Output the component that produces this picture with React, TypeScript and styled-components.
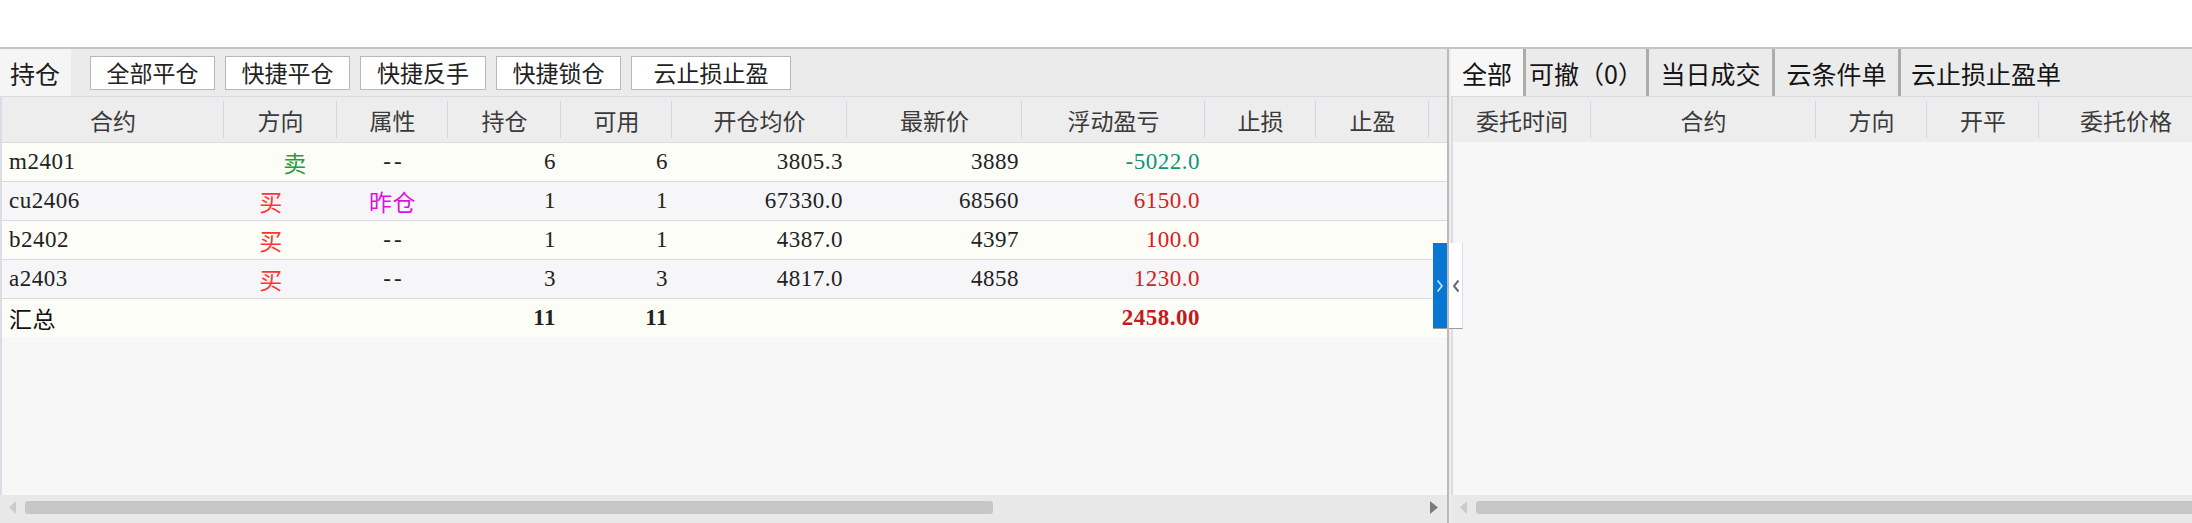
import React from 'react'
import styled, { createGlobalStyle, css } from 'styled-components'

const GlobalStyle = createGlobalStyle`
  html, body {
    margin: 0;
    padding: 0;
    background: #ffffff;
    overflow: hidden;
  }
  * {
    box-sizing: border-box;
  }
`

const SANS = `"Noto Sans CJK SC", "Noto Sans", sans-serif`
const SERIF = `"Liberation Serif", "Noto Sans CJK SC", serif`

type Align = 'left' | 'center' | 'right'

const LEFT_COLS = '222px 113px 111px 113px 111px 175px 175px 183px 111px 113px 1fr'
const RIGHT_COLS = '138px 225px 111px 112px 174px'

const Page = styled.div`
  width: 2192px;
  height: 523px;
  display: flex;
  flex-direction: column;
  overflow: hidden;
`

const TopBar = styled.div`
  height: 49px;
  flex: none;
  background: #ffffff;
  border-bottom: 2px solid #c4c4c4;
`

const Workspace = styled.div`
  position: relative;
  flex: 1;
  display: flex;
  min-height: 0;
`

const Pane = styled.div<{ $w?: number }>`
  display: flex;
  flex-direction: column;
  min-width: 0;
  overflow: hidden;
  ${(p) =>
    p.$w
      ? css`
          width: ${p.$w}px;
          flex: none;
        `
      : css`
          flex: 1;
        `}
`

const Toolbar = styled.div`
  height: 47px;
  flex: none;
  display: flex;
  align-items: center;
  gap: 10px;
  background: #ebebeb;
`

const PaneLabel = styled.div`
  width: 71px;
  height: 100%;
  margin-right: 9px;
  display: flex;
  align-items: center;
  padding-left: 10px;
  background: #f5f5f5;
  font-family: ${SANS};
  font-size: 25px;
  color: #1c1c1c;
`

const ToolButton = styled.button<{ $w: number }>`
  width: ${(p) => p.$w}px;
  height: 34px;
  padding: 0;
  background: #ffffff;
  border: 1px solid #b8b8b8;
  border-radius: 0;
  font-family: ${SANS};
  font-size: 23px;
  line-height: 1;
  color: #222;
`

const TabBar = styled.div`
  height: 47px;
  flex: none;
  display: flex;
  background: #ebebeb;
`

const Tab = styled.div<{ $active?: boolean; $w?: number; $last?: boolean }>`
  height: 100%;
  display: flex;
  align-items: center;
  justify-content: ${(p) => (p.$w ? 'center' : 'flex-start')};
  padding: 0 10px;
  width: ${(p) => (p.$w ? `${p.$w}px` : 'auto')};
  flex: none;
  background: ${(p) => (p.$active ? '#f7f7f7' : '#ebebeb')};
  border-right: ${(p) => (p.$last ? 'none' : '3px solid #acacac')};
  font-family: ${SANS};
  font-size: 25px;
  color: #141414;
  white-space: nowrap;
`

const Table = styled.div`
  flex: 1;
  display: flex;
  flex-direction: column;
  min-height: 0;
  background: #f7f7f7;
  border-left: 2px solid #dcdce6;
`

const HeadRow = styled.div<{ $cols: string }>`
  height: 46px;
  flex: none;
  display: grid;
  grid-template-columns: ${(p) => p.$cols};
  background: #ededed;
  border-top: 1px solid #d8dbe3;
`

const HeadCell = styled.div<{ $sep?: boolean }>`
  position: relative;
  display: flex;
  align-items: center;
  justify-content: center;
  font-family: ${SANS};
  font-size: 23px;
  color: #3a3a3a;
  white-space: nowrap;

  &::after {
    content: '';
    display: ${(p) => (p.$sep === false ? 'none' : 'block')};
    position: absolute;
    top: 4px;
    bottom: 4px;
    right: 0;
    width: 1px;
    background: #d2d6de;
  }
`

const Row = styled.div<{ $alt?: boolean; $total?: boolean }>`
  height: 39px;
  flex: none;
  display: grid;
  grid-template-columns: ${LEFT_COLS};
  background: ${(p) => (p.$alt ? '#f6f6f8' : '#fdfdf8')};
  border-top: 1px solid #dadae2;
  font-weight: ${(p) => (p.$total ? 700 : 400)};
`

const Cell = styled.div<{
  $align?: Align
  $pl?: number
  $pr?: number
  $color?: string
  $spread?: boolean
  $plain?: boolean
}>`
  display: flex;
  align-items: center;
  justify-content: ${(p) =>
    p.$align === 'right' ? 'flex-end' : p.$align === 'center' ? 'center' : 'flex-start'};
  padding-left: ${(p) => p.$pl ?? 0}px;
  padding-right: ${(p) => p.$pr ?? 0}px;
  font-family: ${SERIF};
  font-size: 23px;
  letter-spacing: ${(p) => (p.$spread ? '3px' : '0.5px')};
  font-weight: ${(p) => (p.$plain ? 400 : 'inherit')};
  color: ${(p) => p.$color ?? '#222'};
  white-space: nowrap;
`

const Filler = styled.div`
  flex: 1;
`

const HScroll = styled.div`
  height: 28px;
  flex: none;
  display: flex;
  align-items: flex-start;
  padding-top: 6px;
  background: #e8e8e8;
  overflow: hidden;
`

const ScrollArrow = styled.svg<{ $end?: boolean }>`
  flex: none;
  width: 8px;
  height: 13px;
  margin: ${(p) => (p.$end ? '0 9px 0 auto' : '0 8px 0 9px')};
`

const ScrollThumb = styled.div<{ $w: number }>`
  flex: none;
  width: ${(p) => p.$w}px;
  height: 13px;
  border-radius: 3px;
  background: #c6c6c6;
`

const Splitter = styled.div`
  width: 4px;
  flex: none;
  background: #bababa;
  border-right: 2px solid #eeeeee;
`

const CollapseTab = styled.div<{ $blue?: boolean; $left: number }>`
  position: absolute;
  top: 194px;
  left: ${(p) => p.$left}px;
  width: 14px;
  height: 86px;
  display: flex;
  align-items: center;
  justify-content: center;
  background: ${(p) => (p.$blue ? '#0877d4' : '#ffffff')};
  border-bottom: 1px solid #9c9c9c;
  border-right: ${(p) => (p.$blue ? 'none' : '1px solid #cfe1f2')};
`

type Position = {
  code: string
  dir: '买' | '卖'
  attr: string
  pos: number
  avail: number
  open: string
  last: string
  pnl: string
}

const positions: Position[] = [
  { code: 'm2401', dir: '卖', attr: '--', pos: 6, avail: 6, open: '3805.3', last: '3889', pnl: '-5022.0' },
  { code: 'cu2406', dir: '买', attr: '昨仓', pos: 1, avail: 1, open: '67330.0', last: '68560', pnl: '6150.0' },
  { code: 'b2402', dir: '买', attr: '--', pos: 1, avail: 1, open: '4387.0', last: '4397', pnl: '100.0' },
  { code: 'a2403', dir: '买', attr: '--', pos: 3, avail: 3, open: '4817.0', last: '4858', pnl: '1230.0' },
]

const leftHeads = ['合约', '方向', '属性', '持仓', '可用', '开仓均价', '最新价', '浮动盈亏', '止损', '止盈']
const rightHeads = ['委托时间', '合约', '方向', '开平', '委托价格']
const toolButtons: [string, number][] = [
  ['全部平仓', 125],
  ['快捷平仓', 125],
  ['快捷反手', 126],
  ['快捷锁仓', 125],
  ['云止损止盈', 160],
]
const tabs: [string, number | undefined][] = [
  ['全部', 75],
  ['可撤（0）', 123],
  ['当日成交', 126],
  ['云条件单', 126],
  ['云止损止盈单', undefined],
]

const pnlColor = (v: string) => (v.startsWith('-') ? '#12937a' : '#d42222')

const Scrollbar = ({ thumb, endArrow }: { thumb: number; endArrow?: boolean }) => (
  <HScroll>
    <ScrollArrow viewBox="0 0 8 13">
      <polygon points="7,0 7,13 0,6.5" fill="#cbcbcb" />
    </ScrollArrow>
    <ScrollThumb $w={thumb} />
    {endArrow && (
      <ScrollArrow viewBox="0 0 8 13" $end>
        <polygon points="0,0 0,13 8,6.5" fill="#7b7b7b" />
      </ScrollArrow>
    )}
  </HScroll>
)

const App: React.FC = () => (
  <Page>
    <GlobalStyle />
    <TopBar />
    <Workspace>
      <Pane $w={1447}>
        <Toolbar>
          <PaneLabel>持仓</PaneLabel>
          {toolButtons.map(([label, w]) => (
            <ToolButton key={label} $w={w}>
              {label}
            </ToolButton>
          ))}
        </Toolbar>
        <Table>
          <HeadRow $cols={LEFT_COLS}>
            {leftHeads.map((h) => (
              <HeadCell key={h}>{h}</HeadCell>
            ))}
            <HeadCell $sep={false} />
          </HeadRow>
          {positions.map((p, i) => (
            <Row key={p.code} $alt={i % 2 === 1}>
              <Cell $pl={7}>{p.code}</Cell>
              {p.dir === '卖' ? (
                <Cell $align="center" $pl={29} $color="#2a9a34">
                  卖
                </Cell>
              ) : (
                <Cell $align="center" $pr={19} $color="#ff3535">
                  买
                </Cell>
              )}
              {p.attr === '昨仓' ? (
                <Cell $align="center" $color="#e010e0">
                  {p.attr}
                </Cell>
              ) : (
                <Cell $align="center" $pl={3} $spread>
                  {p.attr}
                </Cell>
              )}
              <Cell $align="right" $pr={5}>{p.pos}</Cell>
              <Cell $align="right" $pr={4}>{p.avail}</Cell>
              <Cell $align="right" $pr={4}>{p.open}</Cell>
              <Cell $align="right" $pr={3}>{p.last}</Cell>
              <Cell $align="right" $pr={5} $color={pnlColor(p.pnl)}>
                {p.pnl}
              </Cell>
              <Cell />
              <Cell />
              <Cell />
            </Row>
          ))}
          <Row $total>
            <Cell $pl={7} $plain $color="#111">
              汇总
            </Cell>
            <Cell />
            <Cell />
            <Cell $align="right" $pr={5}>11</Cell>
            <Cell $align="right" $pr={4}>11</Cell>
            <Cell />
            <Cell />
            <Cell $align="right" $pr={5} $color="#c41a1a">
              2458.00
            </Cell>
            <Cell />
            <Cell />
            <Cell />
          </Row>
          <Filler />
        </Table>
        <Scrollbar thumb={968} endArrow />
      </Pane>
      <Splitter />
      <Pane>
        <TabBar>
          {tabs.map(([label, w], i) => (
            <Tab key={label} $active={i === 0} $w={w} $last={i === tabs.length - 1}>
              {label}
            </Tab>
          ))}
        </TabBar>
        <Table>
          <HeadRow $cols={RIGHT_COLS}>
            {rightHeads.map((h) => (
              <HeadCell key={h}>{h}</HeadCell>
            ))}
          </HeadRow>
          <Filler />
        </Table>
        <Scrollbar thumb={900} />
      </Pane>

      <CollapseTab $blue $left={1433}>
        <svg width="8" height="14" viewBox="0 0 8 14">
          <polyline points="1.5,1.5 6,7 1.5,12.5" fill="none" stroke="#cfe6f8" strokeWidth="1.6" />
        </svg>
      </CollapseTab>
      <CollapseTab $left={1449}>
        <svg width="8" height="14" viewBox="0 0 8 14">
          <polyline points="6.5,1.5 2,7 6.5,12.5" fill="none" stroke="#6a6a6a" strokeWidth="2" />
        </svg>
      </CollapseTab>
    </Workspace>
  </Page>
)

export default App
